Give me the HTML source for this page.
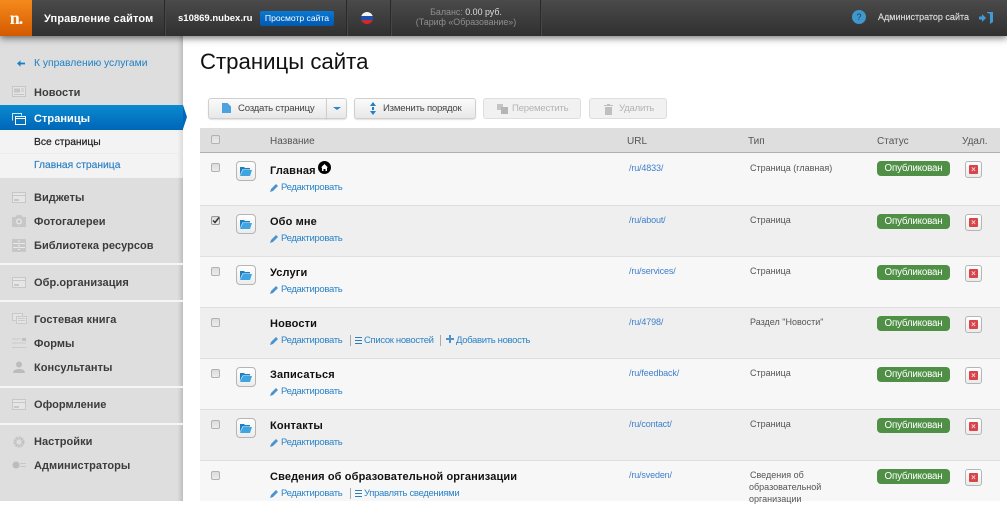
<!DOCTYPE html>
<html lang="ru"><head><meta charset="utf-8"><title>Страницы сайта</title>
<style>
html,body{margin:0;padding:0;background:#fff}
body{width:1007px;height:501px;overflow:hidden;position:relative;font-family:"Liberation Sans","Noto Sans CJK SC",sans-serif;font-size:11px;color:#444}
.a{position:absolute;white-space:nowrap}
svg{position:absolute;display:block}
#top{left:0;top:0;width:1007px;height:36px;background:linear-gradient(#4a4a4a,#303030);box-shadow:0 2px 7px rgba(0,0,0,.55);z-index:5}
#logo{left:0;top:0;width:32px;height:36px;background:linear-gradient(#f58a1c,#d45a00);color:#fff;font:bold 18px/36px "Liberation Serif",serif;text-align:center;letter-spacing:-1px}
.sep{top:0;width:1px;height:36px;background:#2a2a2a;border-right:1px solid #464646}
#side{left:0;top:36px;width:183px;height:465px;background:#dedede;box-shadow:inset -5px 0 5px -3px rgba(0,0,0,.18)}
.n{left:34px;font-weight:bold;font-size:11px;letter-spacing:.05px;color:#3c3c3c;line-height:14px}
.hr{left:0;width:183px;height:2px;background:#f5f5f5}
.ni{left:12px;opacity:.85}
#act{left:0;top:105px;width:183px;height:25px;background:linear-gradient(#0a8ad0,#0066b8);z-index:2}
#arr{left:183px;top:105px;width:0;height:0;border-left:4px solid #0068b9;border-top:12.5px solid transparent;border-bottom:12.5px solid transparent;z-index:2}
#sub{left:0;top:130px;width:183px;height:48px;background:#f3f3f3;box-shadow:inset -5px 0 5px -3px rgba(0,0,0,.12)}
.btn{top:98px;height:21px;box-sizing:border-box;background:linear-gradient(#fbfbfb,#e8e8e8);border:1px solid #cfcfcf;border-radius:3px;box-shadow:0 1px 1px rgba(0,0,0,.12);color:#444;font-size:9.6px;letter-spacing:-.22px;line-height:20px}
.dis{background:#f1f1f1;color:#b4b4b4;box-shadow:none;border-color:#dedede}
#th{left:200px;top:128px;width:800px;height:24px;background:#dedede;border-bottom:1px solid #b0b0b0}
.th{top:135px;font-size:10px;color:#555;line-height:13px}
.row{left:200px;width:800px;box-sizing:border-box;border-bottom:1px solid #dfdfdf}
.cb{left:211px;width:9px;height:9px;box-sizing:border-box;border:1px solid #b2b2b2;border-radius:2px;background:linear-gradient(#dcdcdc,#ececec)}
.fb{left:236px;width:20px;height:20px;box-sizing:border-box;border:1px solid #b5b5b5;border-radius:4px;background:linear-gradient(#fff,#ececec)}
.nm{left:270px;font-weight:bold;font-size:11px;letter-spacing:.13px;color:#111;line-height:14px}
.lk{color:#2a83c8;font-size:9.5px;letter-spacing:-.33px;line-height:12px}
.url{left:629px;font-size:9px;color:#3f80cc;line-height:12px;letter-spacing:-.15px}
.tp{left:750px;font-size:9px;color:#555;line-height:12px}
.st{left:877px;width:73px;height:15px;background:#4f8f46;border-radius:4px;color:#fff;font-size:9.8px;letter-spacing:-.2px;line-height:16px;text-align:center}
.del{left:965px;width:17px;height:17px;box-sizing:border-box;border:1px solid #b5b5b5;border-radius:3px;background:linear-gradient(#fff,#ebebeb)}
.del:after{content:"×";position:absolute;left:3px;top:3px;width:9px;height:9px;background:#d9434a;border-radius:1px;color:#f7d0d0;font:bold 8px/9px "Liberation Sans",sans-serif;text-align:center}
.bar{width:1px;height:11px;background:#aaa}
</style></head><body>

<div class="a" id="side"></div>
<svg style="left:17px;top:60px" width="8" height="7" viewBox="0 0 9 7"><path d="M0 3.500L4 0v2.500h5v2H4V7z" fill="#1480c8"/></svg>
<div class="a" style="left:34px;top:57px;color:#1c7fc4;font-size:10.3px;line-height:13px">К управлению услугами</div>

<svg class="ni" style="top:86px" width="14" height="11" viewBox="0 0 14 11"><rect x=".5" y=".5" width="13" height="10" fill="#e6e6e6" stroke="#c2c2c2"/><path d="M2 2.500h6v4H2z" fill="#c2c2c2"/><path d="M9 3h3M9 5h3M2 8.500h10" stroke="#c2c2c2"/></svg>
<div class="a n" style="top:86px">Новости</div>
<div class="a" id="act"></div><div class="a" id="arr"></div>
<svg style="left:12px;top:113px;z-index:3" width="14" height="12" viewBox="0 0 14 12"><path d="M.5 7.500V.5h9v2" fill="none" stroke="#cfe6f5"/><rect x="3.500" y="3.500" width="10" height="8" fill="none" stroke="#fff"/><path d="M3.500 5.500h10" stroke="#fff"/></svg>
<div class="a n" style="top:112px;color:#fff;z-index:3">Страницы</div>
<div class="a" id="sub"></div>
<div class="a" style="left:0;top:153px;width:178px;height:1px;background:#ececec"></div>
<div class="a" style="left:34px;top:136px;font-size:10.3px;color:#222;line-height:13px;-webkit-text-stroke:.2px #222">Все страницы</div>
<div class="a" style="left:34px;top:159px;font-size:10.3px;color:#2a7fc4;line-height:13px;-webkit-text-stroke:.15px #2a7fc4">Главная страница</div>

<svg class="ni" style="top:192px" width="14" height="11" viewBox="0 0 14 11"><rect x=".5" y=".5" width="13" height="10" fill="#e8e8e8" stroke="#c4c4c4"/><path d="M1 3.500h12" stroke="#c4c4c4" stroke-width="1"/><path d="M2 7h5v2H2z" fill="#c4c4c4"/></svg>
<div class="a n" style="top:191px">Виджеты</div>
<svg class="ni" style="top:215px" width="14" height="12" viewBox="0 0 14 12"><path d="M0 2h3.500L5 0h4l1.500 2H14v10H0z" fill="#c4c4c4"/><circle cx="7" cy="6.500" r="3" fill="#e6e6e6"/><circle cx="7" cy="6.500" r="1.500" fill="#bdbdbd"/></svg>
<div class="a n" style="top:215px">Фотогалереи</div>
<svg class="ni" style="top:239px" width="14" height="13" viewBox="0 0 14 13"><rect width="14" height="13" rx="1" fill="#c4c4c4"/><path d="M1 4.500h12M1 8.500h12" stroke="#ebebeb"/><path d="M6 2h2M6 6.500h2M6 10.500h2" stroke="#ebebeb"/></svg>
<div class="a n" style="top:239px">Библиотека ресурсов</div>
<div class="a hr" style="top:263px"></div>
<svg class="ni" style="top:277px" width="14" height="11" viewBox="0 0 14 11"><rect x=".5" y=".5" width="13" height="10" fill="#e8e8e8" stroke="#c4c4c4"/><path d="M1 3.500h12" stroke="#c4c4c4"/><path d="M2 7h5v2H2z" fill="#c4c4c4"/></svg>
<div class="a n" style="top:276px">Обр.организация</div>
<div class="a hr" style="top:300px"></div>
<svg class="ni" style="top:313px" width="15" height="12" viewBox="0 0 15 12"><rect x=".5" y=".5" width="10" height="7" fill="#e6e6e6" stroke="#c6c6c6"/><rect x="4.500" y="3.500" width="10" height="7" fill="#e6e6e6" stroke="#c6c6c6"/><path d="M6 5.500h7M6 7.500h7" stroke="#c6c6c6"/></svg>
<div class="a n" style="top:313px">Гостевая книга</div>
<svg class="ni" style="top:338px" width="14" height="11" viewBox="0 0 14 11"><path d="M0 1h9M0 5h14M0 9.500h14" stroke="#c8c8c8"/><rect x="10" y="0" width="4" height="3" fill="#bdbdbd"/></svg>
<div class="a n" style="top:337px">Формы</div>
<svg style="left:13px;top:361px" width="12" height="12" viewBox="0 0 12 12"><circle cx="6" cy="3.500" r="3" fill="#bcbcbc"/><path d="M0 12c0-3 3-4 6-4s6 1 6 4z" fill="#bcbcbc"/></svg>
<div class="a n" style="top:361px">Консультанты</div>
<div class="a hr" style="top:386px"></div>
<svg class="ni" style="top:399px" width="14" height="11" viewBox="0 0 14 11"><rect x=".5" y=".5" width="13" height="10" fill="#e8e8e8" stroke="#c4c4c4"/><path d="M1 3.500h12" stroke="#c4c4c4"/><path d="M2 7h5v2H2z" fill="#c4c4c4"/></svg>
<div class="a n" style="top:398px">Оформление</div>
<div class="a hr" style="top:423px"></div>
<svg style="left:13px;top:436px" width="12" height="12" viewBox="0 0 12 12"><circle cx="6" cy="6" r="4" fill="none" stroke="#c2c2c2" stroke-width="3" stroke-dasharray="2 .6"/></svg>
<div class="a n" style="top:435px">Настройки</div>
<svg style="left:12px;top:460px" width="14" height="10" viewBox="0 0 14 10"><circle cx="4" cy="5" r="3.500" fill="#bcbcbc"/><path d="M8 3.500h6M8 6.500h6" stroke="#c8c8c8"/></svg>
<div class="a n" style="top:459px">Администраторы</div>

<div class="a" id="top">
  <div class="a" id="logo">n.</div>
  <div class="a" style="left:44px;top:12px;color:#fff;font-weight:bold;font-size:11px;letter-spacing:.13px;line-height:14px">Управление сайтом</div>
  <div class="a sep" style="left:164px"></div>
  <div class="a" style="left:178px;top:12px;color:#fff;font-weight:bold;font-size:9.5px;line-height:14px">s10869.nubex.ru</div>
  <div class="a" style="left:260px;top:11px;width:74px;height:15px;background:linear-gradient(#0a78d2,#0059b0);border-radius:2px;color:#fff;font-size:8.6px;line-height:15px;text-align:center">Просмотр сайта</div>
  <div class="a sep" style="left:346px"></div>
  <div class="a" style="left:361px;top:12px;width:12px;height:12px;border-radius:50%;background:linear-gradient(#f4f4f4 0,#f4f4f4 33%,#1b4fb0 33%,#1b4fb0 66%,#d7262b 66%)"></div>
  <div class="a sep" style="left:390px"></div>
  <div class="a" style="left:391px;top:7px;width:150px;text-align:center;color:#8f8f8f;font-size:8.9px;line-height:10px">Баланс: <span style="color:#ddd">0.00 руб.</span><br>(Тариф «Образование»)</div>
  <div class="a sep" style="left:540px"></div>
  <div class="a" style="left:852px;top:10px;width:14px;height:14px;border-radius:50%;background:#3f97cb;color:#123e5c;font-size:9px;line-height:14px;text-align:center">?</div>
  <div class="a" style="left:878px;top:11px;color:#ddd;font-size:9px;line-height:13px;-webkit-text-stroke:.15px #ddd">Администратор сайта</div>
  <svg style="left:979px;top:12px" width="15" height="12" viewBox="0 0 15 12"><path d="M0 4.500h3V2l4 4-4 4V7.500H0z" fill="#3f9ad6"/><path d="M8 0h6v10l-3 2V2L8 .8z" fill="#3f9ad6"/></svg>
</div>

<div class="a" style="left:200px;top:49px;font-size:22.2px;line-height:26px;color:#111">Страницы сайта</div>

<div class="a btn" style="left:208px;width:119px;border-radius:3px 0 0 3px"><span class="a" style="left:29px">Создать страницу</span>
<svg style="left:13px;top:4px" width="9" height="10" viewBox="0 0 9 10"><path d="M0 0h5.500L9 3.500V10H0z" fill="#4aa3dc"/></svg></div>
<div class="a btn" style="left:326px;width:21px;border-radius:0 3px 3px 0"><span class="a" style="left:6px;top:8px;width:0;height:0;border:4px solid transparent;border-top:3px solid #2a83c8;border-bottom:0"></span></div>
<div class="a btn" style="left:354px;width:122px"><span class="a" style="left:28px">Изменить порядок</span>
<svg style="left:15px;top:3px" width="6" height="13" viewBox="0 0 6 13"><path d="M3 0l3 4H0zM3 13l3-4H0zM2 5h2v3H2z" fill="#1f80c4"/></svg></div>
<div class="a btn dis" style="left:483px;width:98px"><span class="a" style="left:28px">Переместить</span>
<svg style="left:13px;top:5px" width="11" height="10" viewBox="0 0 11 10"><rect width="6" height="6" fill="#c4c4c4"/><rect x="4" y="3" width="7" height="7" fill="#b5b5b5"/></svg></div>
<div class="a btn dis" style="left:589px;width:78px"><span class="a" style="left:29px">Удалить</span>
<svg style="left:14px;top:5px" width="9" height="11" viewBox="0 0 9 11"><path d="M0 1h9v1H0zM3 0h3v1H3zM1 3h7v8H1z" fill="#bfbfbf"/></svg></div>

<div class="a" id="th"></div>
<div class="a cb" style="top:135px"></div>
<div class="a th" style="left:270px">Название</div>
<div class="a th" style="left:627px">URL</div>
<div class="a th" style="left:748px">Тип</div>
<div class="a th" style="left:877px">Статус</div>
<div class="a th" style="left:962px">Удал.</div>

<!-- rows -->
<div class="a row" style="top:153px;height:53px;background:#f7f7f7"></div>
<div class="a row" style="top:206px;height:51px;background:#efefef"></div>
<div class="a row" style="top:257px;height:51px;background:#f7f7f7"></div>
<div class="a row" style="top:308px;height:51px;background:#efefef"></div>
<div class="a row" style="top:359px;height:51px;background:#f7f7f7"></div>
<div class="a row" style="top:410px;height:51px;background:#efefef"></div>
<div class="a row" style="top:461px;height:40px;background:#f7f7f7;border:0"></div>

<svg width="0" height="0" style="position:absolute"><defs>
<symbol id="f" viewBox="0 0 12 10"><path d="M0 1h4l1 1h5v1.500H2.500L0 9z" fill="#1e80c4"/><path d="M3 4h9L10 10H0z" fill="#3fa5e2"/></symbol>
<symbol id="p" viewBox="0 0 9 9"><path d="M0 9l1-3 5-5 2 2-5 5z" fill="#4a93cf"/></symbol>
</defs></svg>

<!-- 1 -->
<div class="a cb" style="top:163px"></div>
<div class="a fb" style="top:161px"><svg style="left:3px;top:4px" width="12" height="10"><use href="#f"/></svg></div>
<div class="a nm" style="top:164px">Главная</div>
<div class="a" style="left:318px;top:161px;width:13px;height:13px;border-radius:50%;background:#000"></div>
<svg style="left:321px;top:164px" width="7" height="7" viewBox="0 0 7 7"><path d="M3.500 0L7 3.500H6V7H4.500V5h-2v2H1V3.500H0z" fill="#fff"/></svg>
<svg style="left:270px;top:183px" width="9" height="9"><use href="#p"/></svg><div class="a lk" style="left:281px;top:182px">Редактировать</div>
<div class="a url" style="top:162px">/ru/4833/</div><div class="a tp" style="top:162px">Страница (главная)</div>
<div class="a st" style="top:161px">Опубликован</div><div class="a del" style="top:161px"></div>

<!-- 2 -->
<div class="a cb" style="top:216px;border-color:#999"></div>
<svg style="left:212px;top:217px" width="8" height="7" viewBox="0 0 8 7"><path d="M1 3.500l2 2 4-5" fill="none" stroke="#333" stroke-width="1.500"/></svg>
<div class="a fb" style="top:214px"><svg style="left:3px;top:4px" width="12" height="10"><use href="#f"/></svg></div>
<div class="a nm" style="top:215px">Обо мне</div>
<svg style="left:270px;top:234px" width="9" height="9"><use href="#p"/></svg><div class="a lk" style="left:281px;top:233px">Редактировать</div>
<div class="a url" style="top:214px">/ru/about/</div><div class="a tp" style="top:214px">Страница</div>
<div class="a st" style="top:214px">Опубликован</div><div class="a del" style="top:214px"></div>

<!-- 3 -->
<div class="a cb" style="top:267px"></div>
<div class="a fb" style="top:265px"><svg style="left:3px;top:4px" width="12" height="10"><use href="#f"/></svg></div>
<div class="a nm" style="top:266px">Услуги</div>
<svg style="left:270px;top:285px" width="9" height="9"><use href="#p"/></svg><div class="a lk" style="left:281px;top:284px">Редактировать</div>
<div class="a url" style="top:265px">/ru/services/</div><div class="a tp" style="top:265px">Страница</div>
<div class="a st" style="top:265px">Опубликован</div><div class="a del" style="top:265px"></div>

<!-- 4 -->
<div class="a cb" style="top:318px"></div>
<div class="a nm" style="top:317px">Новости</div>
<svg style="left:270px;top:336px" width="9" height="9"><use href="#p"/></svg><div class="a lk" style="left:281px;top:335px">Редактировать</div>
<div class="a bar" style="left:350px;top:335px"></div>
<svg style="left:355px;top:337px" width="7" height="7" viewBox="0 0 7 7"><path d="M0 .5h7M0 3.500h7M0 6.500h7" stroke="#2a7fc0"/></svg>
<div class="a lk" style="left:364px;top:335px">Список новостей</div>
<div class="a bar" style="left:440px;top:335px"></div>
<svg style="left:446px;top:335px" width="8" height="8" viewBox="0 0 8 8"><path d="M3 0h2v3h3v2H5v3H3V5H0V3h3z" fill="#4a93cf"/></svg>
<div class="a lk" style="left:456px;top:335px">Добавить новость</div>
<div class="a url" style="top:316px">/ru/4798/</div><div class="a tp" style="top:316px">Раздел "Новости"</div>
<div class="a st" style="top:316px">Опубликован</div><div class="a del" style="top:316px"></div>

<!-- 5 -->
<div class="a cb" style="top:369px"></div>
<div class="a fb" style="top:367px"><svg style="left:3px;top:4px" width="12" height="10"><use href="#f"/></svg></div>
<div class="a nm" style="top:368px">Записаться</div>
<svg style="left:270px;top:387px" width="9" height="9"><use href="#p"/></svg><div class="a lk" style="left:281px;top:386px">Редактировать</div>
<div class="a url" style="top:367px">/ru/feedback/</div><div class="a tp" style="top:367px">Страница</div>
<div class="a st" style="top:367px">Опубликован</div><div class="a del" style="top:367px"></div>

<!-- 6 -->
<div class="a cb" style="top:420px"></div>
<div class="a fb" style="top:418px"><svg style="left:3px;top:4px" width="12" height="10"><use href="#f"/></svg></div>
<div class="a nm" style="top:419px">Контакты</div>
<svg style="left:270px;top:438px" width="9" height="9"><use href="#p"/></svg><div class="a lk" style="left:281px;top:437px">Редактировать</div>
<div class="a url" style="top:418px">/ru/contact/</div><div class="a tp" style="top:418px">Страница</div>
<div class="a st" style="top:418px">Опубликован</div><div class="a del" style="top:418px"></div>

<!-- 7 -->
<div class="a cb" style="top:471px"></div>
<div class="a nm" style="top:470px">Сведения об образовательной организации</div>
<svg style="left:270px;top:489px" width="9" height="9"><use href="#p"/></svg><div class="a lk" style="left:281px;top:488px">Редактировать</div>
<div class="a bar" style="left:350px;top:488px"></div>
<svg style="left:355px;top:490px" width="7" height="7" viewBox="0 0 7 7"><path d="M0 .5h7M0 3.500h7M0 6.500h7" stroke="#2a7fc0"/></svg>
<div class="a lk" style="left:364px;top:488px">Управлять сведениями</div>
<div class="a url" style="top:469px">/ru/sveden/</div>
<div class="a tp" style="top:469px">Сведения об<br><span style="margin-left:-1px">образовательной</span><br><span style="margin-left:-1px">организации</span></div>
<div class="a st" style="top:469px">Опубликован</div><div class="a del" style="top:469px"></div>

</body></html>
